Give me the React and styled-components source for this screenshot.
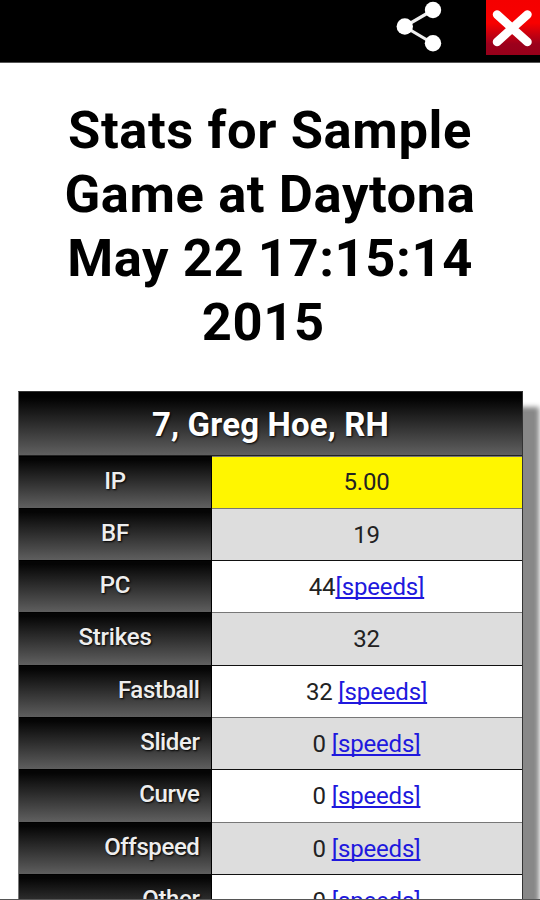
import React from "react";
import styled, { createGlobalStyle } from "styled-components";

const GlobalStyle = createGlobalStyle`
  * { box-sizing: border-box; }
  body { margin: 0; background: #fff; overflow: hidden; }
`;

const Screen = styled.div`
  width: 540px;
  height: 900px;
  overflow: hidden;
  background: #fff;
  color: #000;
  font-family: Roboto, "Liberation Sans", sans-serif;
  border-bottom: 1px solid #555;
`;

const TopBar = styled.header`
  display: flex;
  justify-content: flex-end;
  gap: 38px;
  height: 63px;
  background: #000;
  border-bottom: 1px solid #555;
`;

const IconButton = styled.button`
  display: block;
  width: 54px;
  height: 55px;
  padding: 0;
  border: 0;
  background: ${(p) => p.$fill || "transparent"};
  svg { display: block; }
`;

const Title = styled.h1`
  margin: 35px 0 0;
  font-size: 52.5px;
  font-weight: 700;
  line-height: 64px;
  letter-spacing: 0.6px;
  text-align: center;
`;

const TitleLine = styled.span`
  display: block;
  white-space: pre;
`;

const StatsTable = styled.section`
  width: 505px;
  margin: 37px 0 0 18px;
  border: 1px solid #333;
  border-left-color: #777;
  box-shadow: 16px 16px 5px #888;
`;

const Player = styled.h2`
  margin: 0;
  height: 64px;
  border-bottom: 1px solid #222;
  background: linear-gradient(#000 8%, #606060);
  color: #fff;
  font-size: 33px;
  font-weight: 700;
  line-height: 65px;
  letter-spacing: 0.15px;
  text-align: center;
  text-shadow: 1px 1px 2px #000;
`;

const Row = styled.div`
  display: grid;
  grid-template-columns: 193px 1fr;
  height: ${(p) => p.$height}px;
`;

const Label = styled.div`
  padding-right: ${(p) => (p.$indent ? 11.5 : 0)}px;
  border-top: 1px solid #000;
  border-right: 1px solid #000;
  background: linear-gradient(#050505 6%, #606060);
  color: #eee;
  font-size: 24px;
  font-weight: 500;
  line-height: 49px;
  letter-spacing: ${(p) => (p.$indent ? -0.4 : -0.2)}px;
  text-align: ${(p) => (p.$indent ? "right" : "center")};
  text-shadow: 1px 1px 2px #000;
`;

const tones = { yellow: "#fff600", grey: "#ddd", white: "#fff" };

const Value = styled.div`
  border-top: ${(p) => (p.$tone === "white" ? "1px solid #111" : "1px solid #777")};
  background: ${(p) => tones[p.$tone]};
  color: #222;
  font-size: 24px;
  line-height: ${(p) => (p.$tone === "yellow" ? 51 : 52)}px;
  letter-spacing: -0.15px;
  padding-right: 1px;
  text-align: center;
  white-space: pre;
`;

const SpeedLink = styled.a`
  color: #2018dd;
  text-decoration: underline;
  text-decoration-thickness: 1.5px;
  text-underline-offset: 2px;
  text-decoration-skip-ink: none;
`;

const titleLines = ["Stats for Sample", "Game at Daytona", "May 22 17:15:14", "2015 "];

const rows = [
  { label: "IP", value: "5.00", tone: "yellow", height: 52 },
  { label: "BF", value: "19", tone: "grey", height: 52 },
  { label: "PC", value: "44", tone: "white", height: 52, speeds: true },
  { label: "Strikes", value: "32", tone: "grey", height: 53 },
  { label: "Fastball", value: "32 ", tone: "white", height: 52, speeds: true, indent: true },
  { label: "Slider", value: "0 ", tone: "grey", height: 52, speeds: true, indent: true },
  { label: "Curve", value: "0 ", tone: "white", height: 53, speeds: true, indent: true },
  { label: "Offspeed", value: "0 ", tone: "grey", height: 52, speeds: true, indent: true },
  { label: "Other", value: "0 ", tone: "white", height: 52, speeds: true, indent: true },
];

export default function App() {
  return (
    <Screen>
      <GlobalStyle />
      <TopBar>
        <IconButton aria-label="Share">
          <svg width="54" height="55" viewBox="0 0 54 55" fill="#fff">
            <path d="M39 10 10.5 26.5 39 43.5" fill="none" stroke="#eee" strokeWidth="3.2" />
            <circle cx="39" cy="10" r="8.2" />
            <circle cx="10.8" cy="26.5" r="8.2" />
            <circle cx="39" cy="43.3" r="8.2" />
          </svg>
        </IconButton>
        <IconButton $fill="linear-gradient(#f50000 0%, #f80000 42%, #9c001c 80%, #96001a)" aria-label="Close">
          <svg width="54" height="55" viewBox="0 0 54 55">
            <path d="M11 14.5 41.5 42M41.5 14.5 11 42" stroke="#fff" strokeWidth="8.5" strokeLinecap="round" />
          </svg>
        </IconButton>
      </TopBar>
      <Title>
        {titleLines.map((text) => (
          <TitleLine key={text}>{text}</TitleLine>
        ))}
      </Title>
      <StatsTable>
        <Player>7, Greg Hoe, RH</Player>
        {rows.map((r) => (
          <Row key={r.label} $height={r.height}>
            <Label $indent={r.indent}>{r.label}</Label>
            <Value $tone={r.tone}>
              {r.value}
              {r.speeds && <SpeedLink>[speeds]</SpeedLink>}
            </Value>
          </Row>
        ))}
      </StatsTable>
    </Screen>
  );
}
